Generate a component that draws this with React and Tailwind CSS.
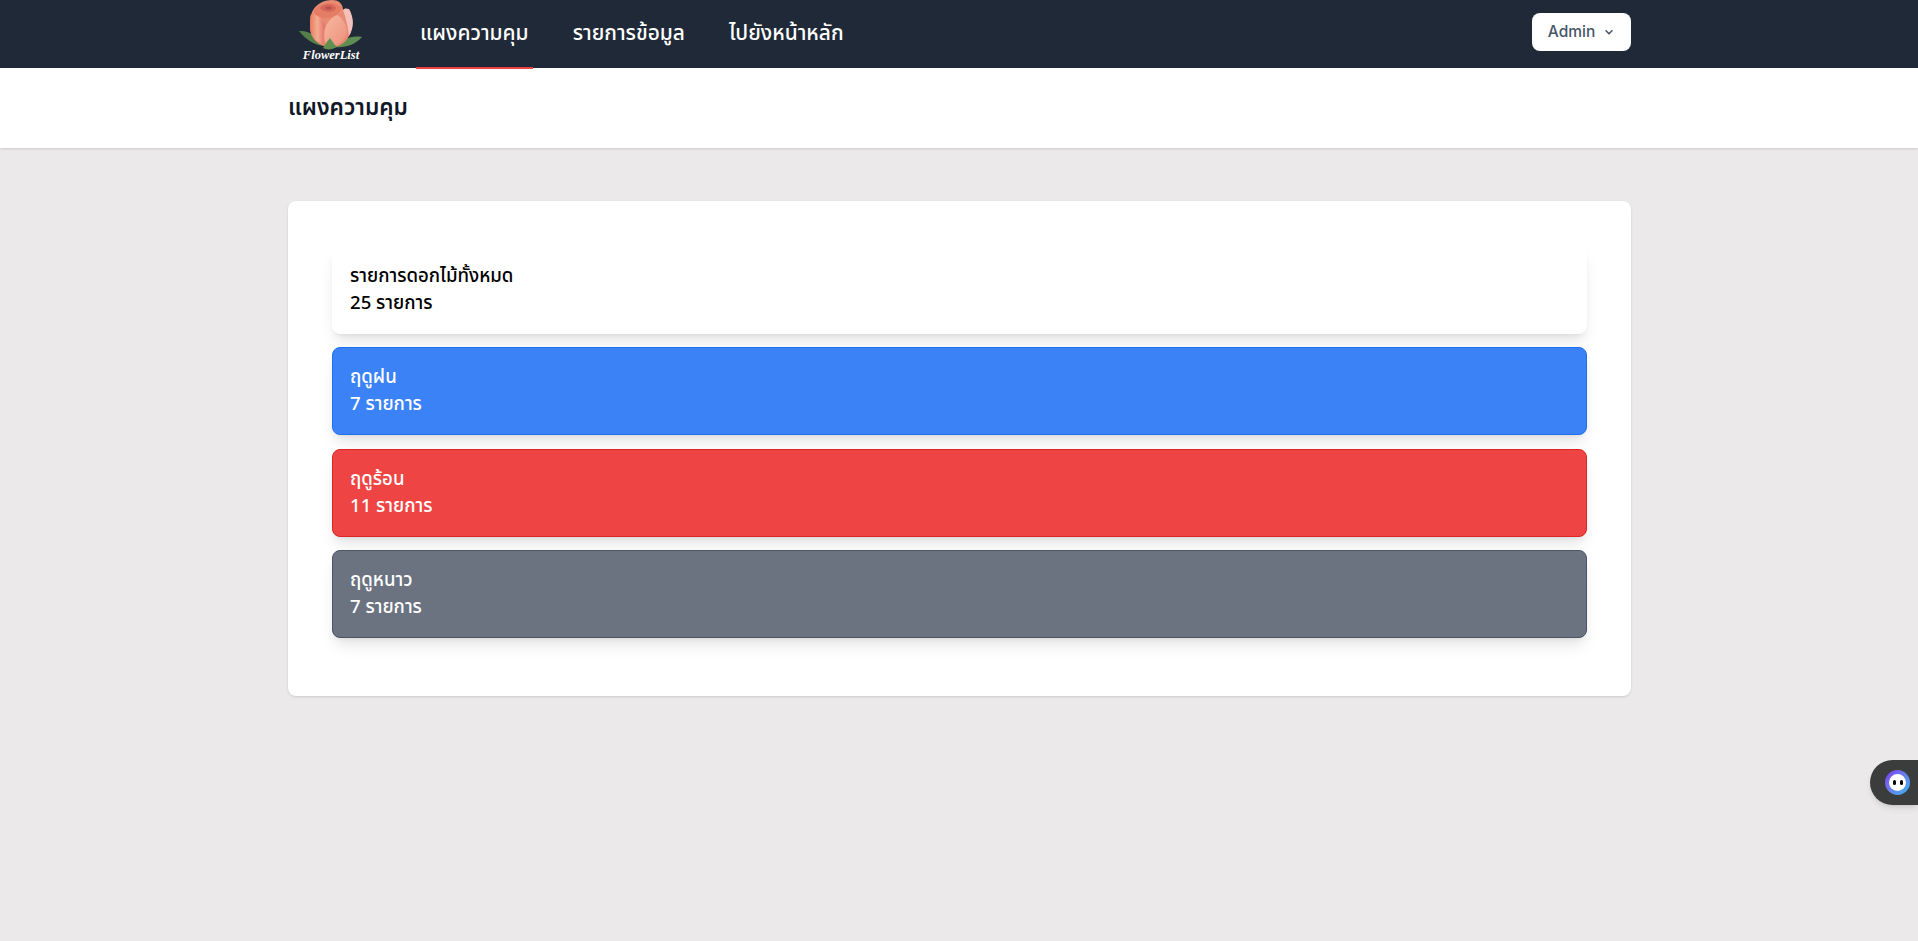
// Dashboard page: nav bar, page title, season summary cards
const FONT = '"Noto Sans Thai", "Noto Sans", Inter, "DejaVu Sans", sans-serif'

const NAV_ITEMS = [
  { id: 'dashboard', label: 'แผงความคุม', active: true },
  { id: 'list', label: 'รายการข้อมูล', active: false },
  { id: 'home', label: 'ไปยังหน้าหลัก', active: false },
]

const STATS = [
  { id: 'all', title: 'รายการดอกไม้ทั้งหมด', count: '25 รายการ', box: 'bg-white text-black border-white' },
  { id: 'rain', title: 'ฤดูฝน', count: '7 รายการ', box: 'bg-[#3b82f6] text-white border-[#1d70f0]' },
  { id: 'hot', title: 'ฤดูร้อน', count: '11 รายการ', box: 'bg-[#ef4444] text-white border-[#dc2626]' },
  { id: 'cold', title: 'ฤดูหนาว', count: '7 รายการ', box: 'bg-[#6b7280] text-white border-[#4b5563]' },
]

function Logo() {
  return (
    <div className="flex flex-col items-center w-[64px]">
      <svg width="64" height="50" viewBox="0 0 64 50" className="shrink-0">
        <defs>
          <linearGradient id="petalMid" x1="0" y1="0" x2="1" y2="1">
            <stop offset="0" stopColor="#f6b9a0" />
            <stop offset="1" stopColor="#ee8f7c" />
          </linearGradient>
          <linearGradient id="petalLeft" x1="0" y1="0" x2="1" y2="0">
            <stop offset="0" stopColor="#e8795f" />
            <stop offset="0.5" stopColor="#f3ad90" />
            <stop offset="1" stopColor="#e36f68" />
          </linearGradient>
        </defs>
        {/* leaves */}
        <path d="M0 31 C10 30 20 37 27 46 C17 46 7 40 0 31Z" fill="#557f49" />
        <path d="M63 37 C52 35 42 40 36 47 C46 48 56 45 63 37Z" fill="#5f8c52" />
        {/* back of the bud */}
        <path d="M12 15 C15 4 25 0 33 0 C41 0 44 5 44 10 L50 9 C54 17 55 27 50 36 C46 44 38 48 30 47 C19 46 11 38 11 27 C11 22 11 18 12 15Z" fill="#e98a72" />
        {/* rolled top */}
        <path d="M15 11 C19 2 37 0 42 8 C41 15 33 18 26 18 C20 18 16 15 15 11Z" fill="#e57c64" />
        <path d="M21 8 C25 3 35 3 37 8 C35 13 25 13 21 8Z" fill="#d4665a" />
        <path d="M26 8 C28 6 32 6 33 8 C32 10 28 10 26 8Z" fill="#b8504d" />
        {/* petals */}
        <path d="M12 14 C19 15 25 19 26 26 C24 32 24 38 26 45 C17 43 10 34 11 25 C11 21 11 17 12 14Z" fill="url(#petalLeft)" />
        <path d="M27 45 C23 34 26 20 38 15 C43 17 48 25 48 32 C46 40 38 47 30 47Z" fill="url(#petalMid)" />
        <path d="M44 10 C46 8 50 8 51 11 C55 19 55 28 50 36 C49 27 47 18 44 10Z" fill="#f4c0bb" />
        {/* calyx */}
        <path d="M24 48 C26 45 28 41 31 38 C33 41 35 44 38 47 C33 50 28 50 24 48Z" fill="#64904f" />
      </svg>
      <span className="text-[12.5px] leading-[11px] font-bold italic text-white whitespace-nowrap" style={{ fontFamily: '"Liberation Serif", serif' }}>
        FlowerList
      </span>
    </div>
  )
}

function FloatingWidget() {
  return (
    <div className="fixed right-0 top-[760px] w-[48px] h-[45px] rounded-l-[23px] bg-[#3b3c3c] shadow-md flex items-center pl-[15px]">
      <div className="w-[25px] h-[25px] rounded-full bg-gradient-to-br from-[#7b2ff2] to-[#1fb6e8] flex items-center justify-center shrink-0">
        <div className="w-[17px] h-[17px] rounded-full bg-white flex items-center justify-center gap-[4px]">
          <span className="w-[3px] h-[5px] rounded-full bg-black"></span>
          <span className="w-[3px] h-[5px] rounded-full bg-black"></span>
        </div>
      </div>
    </div>
  )
}

export default function App() {
  return (
    <div className="min-h-[941px] bg-[#ebe9ea]" style={{ fontFamily: FONT }}>
      {/* Top bar */}
      <nav className="bg-[#1f2937] h-[68px]">
        <div className="w-[1343px] ml-[288px] h-full flex items-center justify-between">
          <div className="flex items-stretch h-full">
            <div className="ml-[11px] mr-[53px]">
              <Logo />
            </div>
            <div className="flex gap-[36px]">
              {NAV_ITEMS.map((item) => (
                <a
                  key={item.id}
                  className={`h-[69px] px-1 flex items-center text-[20.9px] font-medium text-white border-b-2 ${
                    item.active ? 'border-[#ef4444]' : 'border-transparent'
                  }`}
                >
                  {item.label}
                </a>
              ))}
            </div>
          </div>
          <button className="w-[99px] h-[38px] -mt-[4px] bg-white rounded-lg flex items-center justify-center gap-[8px] text-[15.5px] text-[#475569]" style={{ fontFamily: 'Inter, sans-serif', fontWeight: 500 }}>
            Admin
            <svg className="w-3 h-3" viewBox="0 0 20 20" fill="none" stroke="currentColor" strokeWidth="2.6" strokeLinecap="round" strokeLinejoin="round">
              <path d="M5 8l5 5 5-5" />
            </svg>
          </button>
        </div>
      </nav>

      {/* Page title */}
      <header className="bg-white h-[80px] shadow-sm">
        <div className="w-[1343px] ml-[288px] h-full flex items-center pt-[2px]">
          <h2 className="text-[22.6px] font-semibold text-[#111827]">แผงความคุม</h2>
        </div>
      </header>

      {/* Summary */}
      <main className="w-[1343px] ml-[288px] pt-[53px]">
        <div className="bg-white rounded-lg shadow-sm pt-[44.5px] px-[44px] pb-[44px] h-[495px]">
          {STATS.map((stat) => (
            <div key={stat.id} className={`h-[88px] mb-[13.5px] px-[17px] py-[16px] border rounded-lg shadow-lg text-[18.6px] leading-[27px] font-medium ${stat.box}`}>
              <div>{stat.title}</div>
              <div>{stat.count}</div>
            </div>
          ))}
        </div>
      </main>

      <FloatingWidget />
    </div>
  )
}
